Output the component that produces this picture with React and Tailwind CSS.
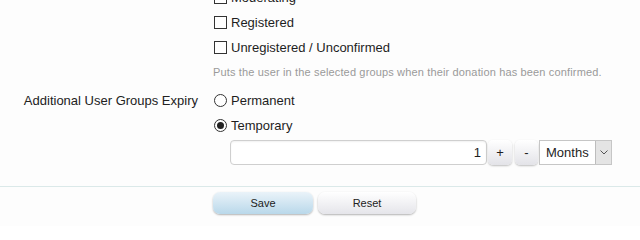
import React from "react";

function Check({ label }) {
  return (
    <label className="flex h-[25px] items-center">
      <span className="ml-px h-[13px] w-[13px] border border-[#333] bg-white" />
      <span className="ml-[4px]">{label}</span>
    </label>
  );
}

function Radio({ label, checked }) {
  return (
    <label className="flex h-[25px] items-center">
      <span className="ml-px flex h-[13px] w-[13px] items-center justify-center rounded-full border border-[#333] bg-white">
        {checked && <span className="h-[7px] w-[7px] rounded-full bg-[#222]" />}
      </span>
      <span className="ml-[4px]">{label}</span>
    </label>
  );
}

export default function App() {
  return (
    <div
      className="h-[226px] w-[640px] overflow-hidden bg-[#fdfdfd] text-[13px] text-[#1e1e1e]"
      style={{ fontFamily: '"Liberation Sans", Arial, sans-serif' }}
    >
      <div className="-mt-[15px] flex">
        <div className="w-[198px] shrink-0" />
        <div className="ml-[15px]">
          <Check label="Moderating" />
          <Check label="Registered" />
          <Check label="Unregistered / Unconfirmed" />
          <div className="flex h-[24px] items-center text-[11px] tracking-[0.15px] text-[#9a9a9a]">
            Puts the user in the selected groups when their donation has been confirmed.
          </div>
        </div>
      </div>
      <div className="mt-[4px] flex">
        <div className="flex h-[25px] w-[198px] shrink-0 items-center justify-end text-[#222]">
          Additional User Groups Expiry
        </div>
        <div className="ml-[15px]">
          <Radio label="Permanent" />
          <Radio label="Temporary" checked />
          <div className="ml-[17px] mt-[2px] flex h-[25px] items-stretch">
            <div className="flex w-[257px] items-center justify-end rounded-[4px] border border-[#cfcfcf] bg-white pr-[5px] shadow-[inset_0_1px_2px_rgba(0,0,0,0.06)]">
              1
            </div>
            <button className="ml-[1px] flex w-[24px] items-center justify-center rounded-[5px] bg-gradient-to-b from-white to-[#e3e3e8] text-[13px] shadow-[0_1px_2px_rgba(0,0,0,0.25)]">
              +
            </button>
            <button className="ml-[3px] flex w-[23px] items-center justify-center rounded-[5px] bg-gradient-to-b from-white to-[#e3e3e8] text-[13px] shadow-[0_1px_2px_rgba(0,0,0,0.25)]">
              -
            </button>
            <div className="ml-px flex w-[73px] items-stretch border border-[#c6c6c6] bg-white">
              <span className="flex flex-1 items-center pl-[6px]">Months</span>
              <span className="flex w-[16px] items-center justify-center border-l border-[#bdbdbd] bg-[#e4e4e4]">
                <svg width="8" height="5" viewBox="0 0 8 5" fill="none" stroke="#555" strokeWidth="1">
                  <path d="M0.5 0.5 L4 4 L7.5 0.5" />
                </svg>
              </span>
            </div>
          </div>
        </div>
      </div>
      <div className="mt-[21px] h-px w-full bg-[#dbe9e9]" />
      <div className="ml-[213px] mt-[5px] flex gap-[5px] text-[11px] text-[#222]">
        <button className="h-[22px] w-[100px] rounded-[7px] bg-gradient-to-b from-[#eaf3f9] to-[#b9d8ea] shadow-[0_1px_2px_rgba(0,0,0,0.3)]">
          Save
        </button>
        <button className="h-[22px] w-[98px] rounded-[7px] bg-gradient-to-b from-white to-[#e5e5ea] shadow-[0_1px_2px_rgba(0,0,0,0.3)]">
          Reset
        </button>
      </div>
    </div>
  );
}
